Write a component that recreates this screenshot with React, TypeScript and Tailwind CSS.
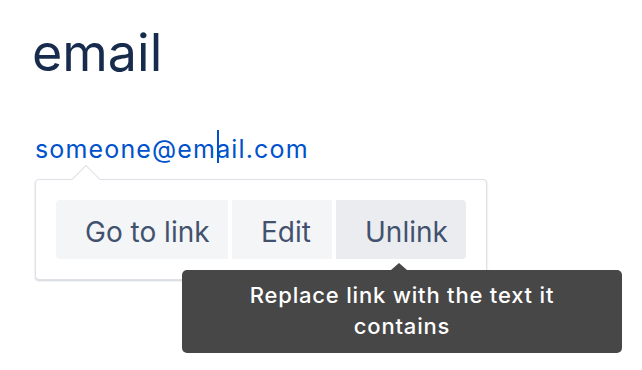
import React from "react";

export default function App() {
  return (
    <div
      className="relative h-[370px] w-[642px] overflow-hidden bg-white"
      style={{ fontFamily: "Inter, 'Noto Sans', sans-serif" }}
    >
      <div className="flex flex-col items-start pl-[34px] pt-[27px]">
        <h1 className="-ml-[2px] text-[52px] font-normal leading-[52px] text-[#172b4d]">email</h1>
        <div className="mt-[58px] pl-[1px] text-[25px] leading-[24px] tracking-[1.15px] text-[#0052cc]">
          someone@em
          <span className="relative">
            <span className="absolute left-[1px] top-[-4px] h-[33px] w-[2px] bg-[#0052cc]" />
          </span>
          ail.com
        </div>
        <div className="relative ml-[1px] mt-[18px] w-[452px] rounded-[4px] border border-[#dfe1e6] bg-white p-[20px] shadow-[0_1px_2px_rgba(9,30,66,0.2)]">
          <div className="absolute left-[40px] top-[-11px] h-[20px] w-[20px] rotate-45 border-l border-t border-[#dfe1e6] bg-white" />
          <div className="relative flex gap-[4px] text-[28px] leading-[28px] text-[#42526e]">
            <div className="h-[59px] w-[172px] rounded-l-[4px] bg-[#f4f5f7] pl-[29px] pt-[18px]">Go to link</div>
            <div className="h-[59px] w-[100px] bg-[#f4f5f7] pl-[29px] pt-[18px]">Edit</div>
            <div className="h-[59px] w-[130px] rounded-r-[4px] bg-[#ebecf0] pl-[29px] pt-[18px]">Unlink</div>
          </div>
        </div>
      </div>
      <div className="absolute left-[182px] top-[270px] h-[83px] w-[440px] rounded-[5px] bg-[#474747] pt-[10px] text-center text-[22px] font-medium leading-[31px] tracking-[0.8px] text-white">
        <div className="absolute left-[209px] top-[-7px] h-0 w-0 border-b-[7px] border-l-[8px] border-r-[8px] border-b-[#474747] border-l-transparent border-r-transparent" />
        Replace link with the text it
        <br />
        contains
      </div>
    </div>
  );
}
